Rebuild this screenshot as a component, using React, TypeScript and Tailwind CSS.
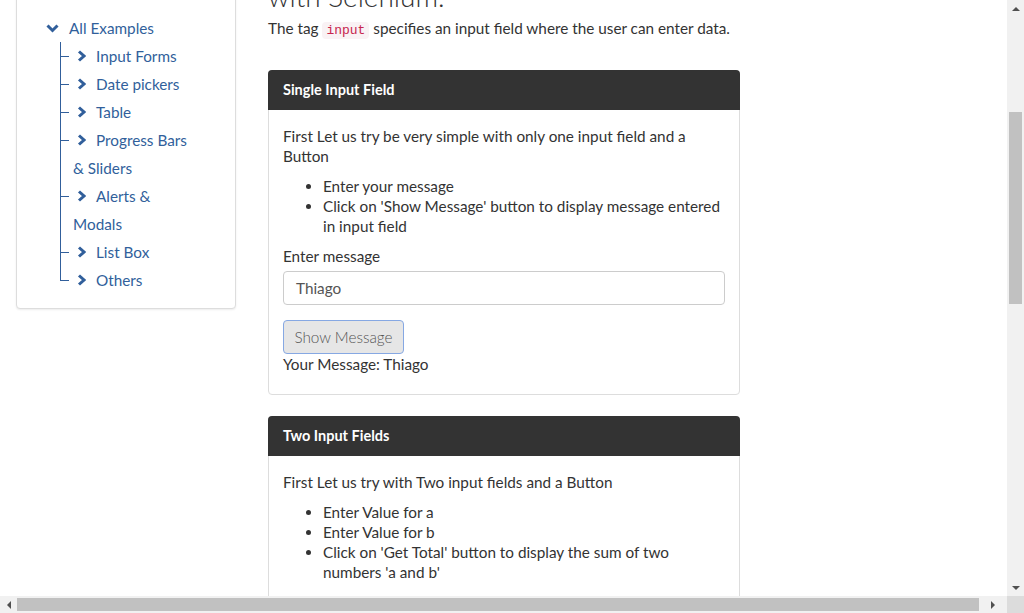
import React from "react";

const BLUE = "#315f9b";

function ChevronRight() {
  return (
    <svg width="9" height="12" viewBox="0 0 9 12" className="shrink-0">
      <polyline points="2,1.5 7,6 2,10.5" fill="none" stroke={BLUE} strokeWidth="3" strokeLinejoin="miter" />
    </svg>
  );
}

function ChevronDown() {
  return (
    <svg width="13" height="9" viewBox="0 0 13 9" className="shrink-0">
      <polyline points="1.5,1.5 6.5,6.5 11.5,1.5" fill="none" stroke={BLUE} strokeWidth="3" />
    </svg>
  );
}

const items: string[][] = [
  ["Input Forms"],
  ["Date pickers"],
  ["Table"],
  ["Progress Bars", "& Sliders"],
  ["Alerts &", "Modals"],
  ["List Box"],
  ["Others"],
];

function Sidebar() {
  return (
    <div className="w-[220px] -mt-[40px] h-[349px] rounded-[4px] border border-[#dddddd] shadow-[0_1px_2px_rgba(0,0,0,0.08)] bg-white">
      <div className="pt-[53px] pl-[29px] text-[15.3px] leading-[28px]" style={{ color: BLUE }}>
        <div className="flex items-center">
          <ChevronDown />
          <span className="ml-[10px]">All Examples</span>
        </div>
        <ul className="ml-[14px] mt-0">
          {items.map((lines, i) => {
            const last = i === items.length - 1;
            return (
              <li key={i} className="relative pl-[13px]">
                <span
                  className={"absolute left-0 top-0 w-px " + (last ? "h-[14px]" : "h-full")}
                  style={{ background: BLUE }}
                />
                <span className="absolute left-0 top-[14px] w-[9px] h-px" style={{ background: BLUE }} />
                <div className="flex items-center">
                  <span className="ml-[4px] flex items-center">
                    <ChevronRight />
                  </span>
                  <span className="ml-[10px]">{lines[0]}</span>
                </div>
                {lines[1] && <div>{lines[1]}</div>}
              </li>
            );
          })}
        </ul>
      </div>
    </div>
  );
}

function Card({ title, children, className = "" }: { title: string; children: React.ReactNode; className?: string }) {
  return (
    <div className={"w-[472px] rounded-[4px] border border-[#dddddd] bg-white " + className}>
      <div className="h-[40px] -m-px rounded-t-[4px] bg-[#333333] px-[15px] flex items-center text-white text-[14.5px] font-bold">
        {title}
      </div>
      <div className="px-[14px] pt-[17px]">{children}</div>
    </div>
  );
}

function Main() {
  return (
    <div className="w-[472px] ml-[32px] text-[#333333] text-[15.3px] leading-[20px]">
      <div className="-mt-[21px] text-[28px] leading-[34px] font-light text-[#333333] whitespace-nowrap">
        with Selenium.
      </div>
      <p className="mt-[5px] h-[20px] whitespace-nowrap">
        The tag{" "}
        <code className="px-[4px] py-[1px] rounded-[4px] bg-[#f9f2f4] text-[#c7254e] text-[13px] leading-none font-['Liberation_Mono',monospace]">
          input
        </code>{" "}
        specifies an input field where the user can enter data.
      </p>

      <Card title="Single Input Field" className="mt-[32px]">
        <p>First Let us try be very simple with only one input field and a Button</p>
        <ul className="mt-[10px] pl-[40px] list-disc">
          <li>Enter your message</li>
          <li>Click on 'Show Message' button to display message entered in input field</li>
        </ul>
        <div className="mt-[10px]">Enter message</div>
        <div className="mt-[5px] h-[34px] rounded-[4px] border border-[#cccccc] flex items-center px-[12px] text-[#555555]">
          Thiago
        </div>
        <div className="mt-[15px] w-[121px] h-[34px] rounded-[4px] border border-[#86a8e3] bg-[#e6e6e6] flex items-center justify-center text-[#555555] font-light">
          Show Message
        </div>
        <div className="pb-[20px]">Your Message: Thiago</div>
      </Card>

      <Card title="Two Input Fields" className="mt-[21px]">
        <p>First Let us try with Two input fields and a Button</p>
        <ul className="mt-[10px] pl-[40px] list-disc">
          <li>Enter Value for a</li>
          <li>Enter Value for b</li>
          <li>Click on 'Get Total' button to display the sum of two numbers 'a and b'</li>
        </ul>
        <div className="h-[60px]" />
      </Card>
    </div>
  );
}

function Tri({ dir }: { dir: "up" | "down" | "left" | "right" }) {
  const pts =
    dir === "up" ? "0,4 4,0 8,4" : dir === "down" ? "0,0 8,0 4,4" : dir === "left" ? "4,0 4,8 0,4" : "0,0 0,8 4,4";
  const w = dir === "up" || dir === "down" ? 8 : 4;
  const h = dir === "up" || dir === "down" ? 4 : 8;
  return (
    <svg width={w} height={h} viewBox={`0 0 ${w} ${h}`}>
      <polygon points={pts} fill="#505050" />
    </svg>
  );
}

export default function App() {
  return (
    <div className="w-[1024px] h-[613px] flex overflow-hidden bg-white font-['Lato',sans-serif]">
      <div className="w-[1007px] flex flex-col">
        <div className="h-[596px] overflow-hidden">
          <div className="flex pl-[16px]">
            <Sidebar />
            <Main />
          </div>
        </div>
        <div className="h-[17px] bg-[#f1f1f1] flex items-center">
          <div className="w-[17px] flex items-center justify-center">
            <Tri dir="left" />
          </div>
          <div className="w-[962px] h-[13px] bg-[#c1c1c1]" />
          <div className="flex-1 flex items-center justify-center">
            <Tri dir="right" />
          </div>
        </div>
      </div>
      <div className="w-[17px] flex flex-col">
        <div className="h-[596px] bg-[#f1f1f1] flex flex-col items-center">
          <div className="h-[17px] flex items-center justify-center">
            <Tri dir="up" />
          </div>
          <div className="mt-[95px] w-[13px] h-[192px] bg-[#c1c1c1]" />
          <div className="flex-1" />
          <div className="h-[17px] flex items-center justify-center">
            <Tri dir="down" />
          </div>
        </div>
        <div className="h-[17px] bg-[#dcdcdc]" />
      </div>
    </div>
  );
}
